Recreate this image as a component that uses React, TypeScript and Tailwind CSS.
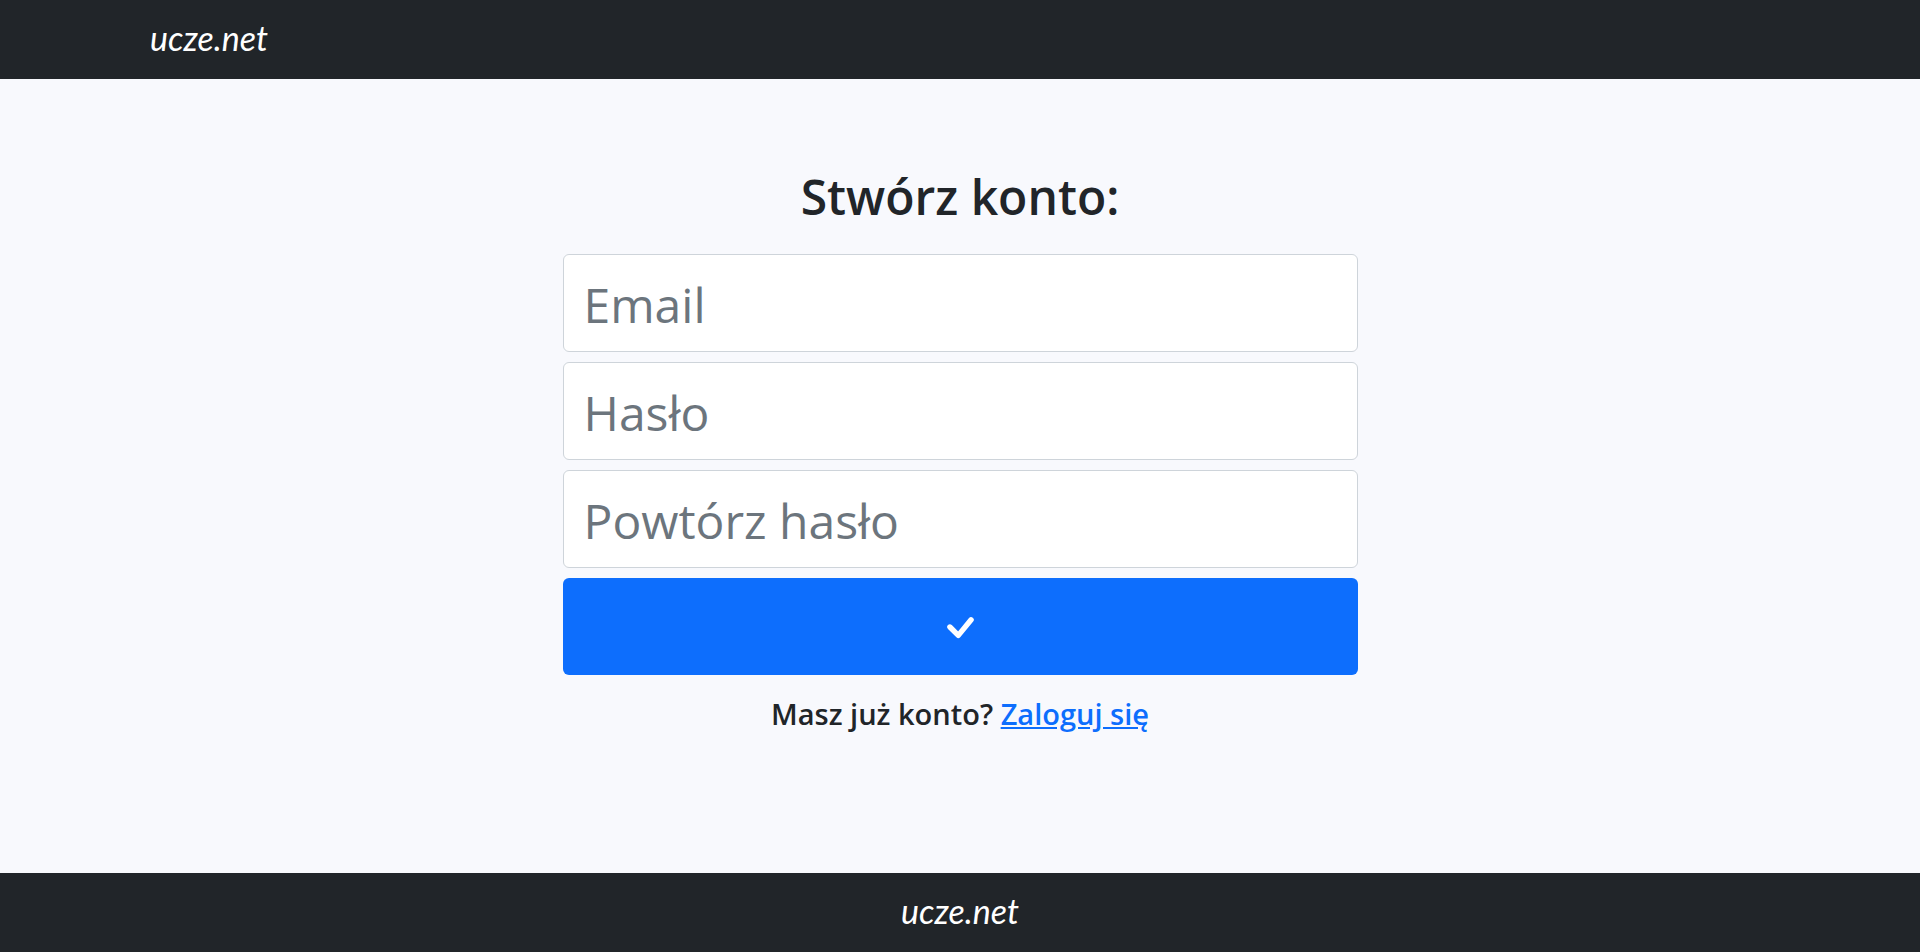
const fields = [
  { id: "email", type: "email", label: "Email", autoComplete: "email" },
  { id: "password", type: "password", label: "Hasło", autoComplete: "new-password" },
  { id: "password-repeat", type: "password", label: "Powtórz hasło", autoComplete: "new-password" },
];

function Logo() {
  return (
    <a href="/" className="font-['Lato',sans-serif] text-[34px] leading-[39px] italic text-white">
      ucze.net
    </a>
  );
}

function CheckIcon() {
  return (
    <svg
      viewBox="0 0 30 30"
      className="size-[30px]"
      fill="none"
      stroke="currentColor"
      strokeWidth="5.4"
      strokeLinecap="round"
      strokeLinejoin="round"
      aria-hidden="true"
    >
      <path d="M4.9 15 13.3 23.4 26.1 7.8" />
    </svg>
  );
}

export default function App() {
  return (
    <div className="flex min-h-screen flex-col bg-[#f8f9fd] font-['Open_Sans','Noto_Sans',sans-serif] text-[#212529]">
      <header className="flex bg-[#212529] px-5 pt-[18px] pb-[22px] lg:px-[150px]">
        <Logo />
      </header>

      <main className="flex flex-1 flex-col items-center px-4 pt-[88px] pb-10">
        <h1 className="text-center text-[48px] leading-[60px] font-semibold">Stwórz konto:</h1>
        <form className="mt-[27px] flex w-full max-w-[795px] flex-col gap-[10px]" onSubmit={(e) => e.preventDefault()}>
          {fields.map((field) => (
            <input
              key={field.id}
              id={field.id}
              type={field.type}
              aria-label={field.label}
              placeholder={field.label}
              autoComplete={field.autoComplete}
              className="block h-[98px] w-full rounded-md border border-[#ced4da] bg-white px-5 pt-0.5 text-[48px] placeholder:text-[#6c757d]"
            />
          ))}
          <button
            type="submit"
            aria-label="Stwórz konto"
            className="flex h-[97px] w-full items-center justify-center rounded-md bg-[#0d6efd] text-white"
          >
            <CheckIcon />
          </button>
        </form>
        <p className="mt-[19px] text-center text-[29px] leading-10 font-semibold">
          Masz już konto?{" "}
          <a href="/login" className="text-[#0d6efd] underline">
            Zaloguj się
          </a>
        </p>
      </main>

      <footer className="flex justify-center bg-[#212529] pt-[18px] pb-[22px]">
        <Logo />
      </footer>
    </div>
  );
}
